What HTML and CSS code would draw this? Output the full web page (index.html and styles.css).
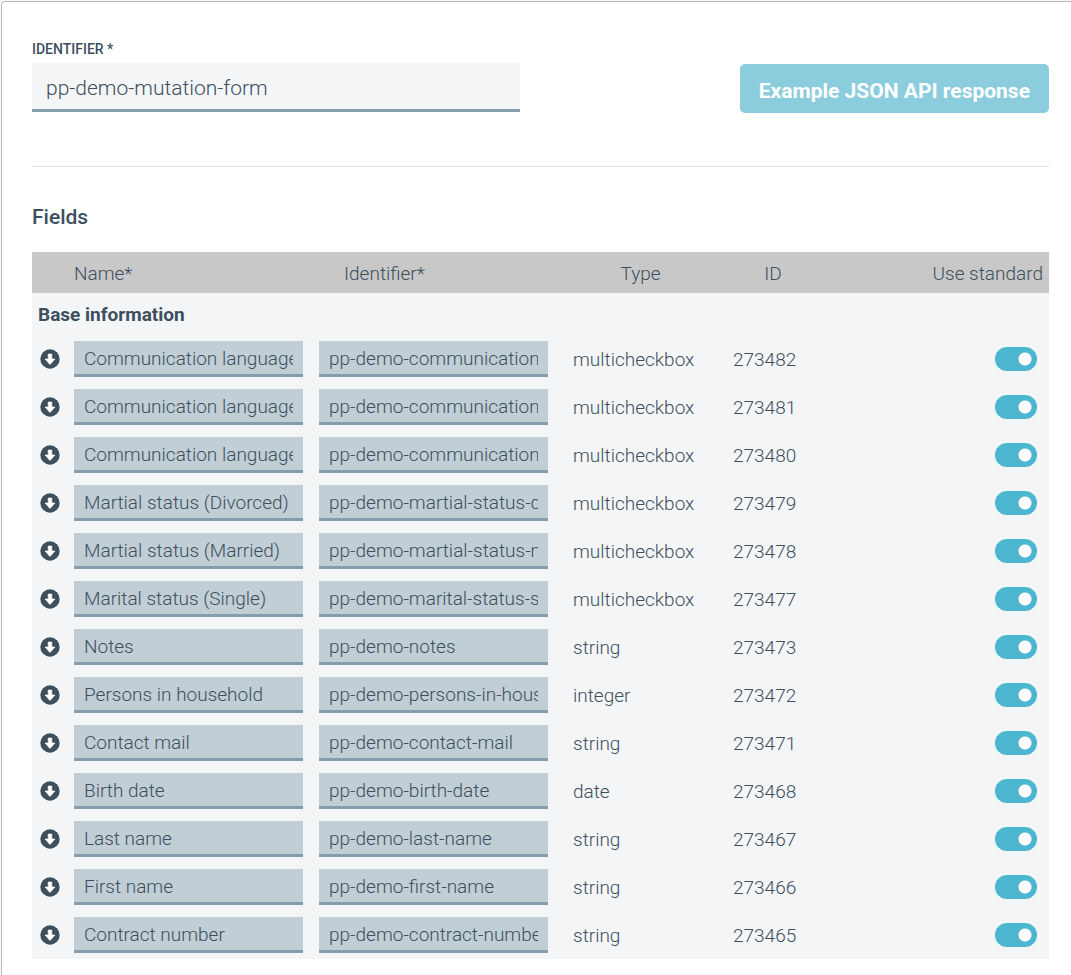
FILE: index.html
```html
<!DOCTYPE html>
<html lang="en">
<head>
    <meta charset="UTF-8">
    <title>Form fields</title>
    <link rel="stylesheet" href="styles.css">
</head>
<body>
<svg class="sprite" aria-hidden="true">
    <symbol id="arrow-down" viewBox="0 0 20 20">
        <circle cx="10" cy="10" r="9.7" fill="#3d4f5c"/>
        <path d="M8.2 5h3.6v5h3.2L10 15.6 5 10h3.2z" fill="#fff" stroke="#fff" stroke-width=".6" stroke-linejoin="round"/>
    </symbol>
</svg>
<main class="panel">
    <div class="top">
        <div class="form-group">
            <label for="identifier">IDENTIFIER *</label>
            <input type="text" id="identifier" value="pp-demo-mutation-form">
        </div>
        <button type="button" class="btn">Example JSON API response</button>
    </div>
    <h2>Fields</h2>
    <table class="fields">
        <colgroup>
            <col class="col-move">
            <col class="col-name">
            <col class="col-name">
            <col class="col-type">
            <col class="col-id">
            <col>
        </colgroup>
        <thead>
        <tr>
            <td></td>
            <th class="name">Name*</th>
            <th class="ident">Identifier*</th>
            <th>Type</th>
            <th>ID</th>
            <th class="standard">Use standard</th>
        </tr>
        </thead>
        <tbody>
        <tr class="group">
            <th colspan="6">Base information</th>
        </tr>
        <tr>
            <td><button type="button" class="move" aria-label="Move down"><svg><use href="#arrow-down"/></svg></button></td>
            <td><input type="text" aria-label="Name" value="Communication language (German)"></td>
            <td><input type="text" aria-label="Identifier" value="pp-demo-communication-language-german"></td>
            <td class="type">multicheckbox</td>
            <td>273482</td>
            <td class="toggle"><input type="checkbox" aria-label="Use standard" checked></td>
        </tr>
        <tr>
            <td><button type="button" class="move" aria-label="Move down"><svg><use href="#arrow-down"/></svg></button></td>
            <td><input type="text" aria-label="Name" value="Communication language (French)"></td>
            <td><input type="text" aria-label="Identifier" value="pp-demo-communication-language-french"></td>
            <td class="type">multicheckbox</td>
            <td>273481</td>
            <td class="toggle"><input type="checkbox" aria-label="Use standard" checked></td>
        </tr>
        <tr>
            <td><button type="button" class="move" aria-label="Move down"><svg><use href="#arrow-down"/></svg></button></td>
            <td><input type="text" aria-label="Name" value="Communication language (English)"></td>
            <td><input type="text" aria-label="Identifier" value="pp-demo-communication-language-english"></td>
            <td class="type">multicheckbox</td>
            <td>273480</td>
            <td class="toggle"><input type="checkbox" aria-label="Use standard" checked></td>
        </tr>
        <tr>
            <td><button type="button" class="move" aria-label="Move down"><svg><use href="#arrow-down"/></svg></button></td>
            <td><input type="text" aria-label="Name" value="Martial status (Divorced)"></td>
            <td><input type="text" aria-label="Identifier" value="pp-demo-martial-status-divorced"></td>
            <td class="type">multicheckbox</td>
            <td>273479</td>
            <td class="toggle"><input type="checkbox" aria-label="Use standard" checked></td>
        </tr>
        <tr>
            <td><button type="button" class="move" aria-label="Move down"><svg><use href="#arrow-down"/></svg></button></td>
            <td><input type="text" aria-label="Name" value="Martial status (Married)"></td>
            <td><input type="text" aria-label="Identifier" value="pp-demo-martial-status-married"></td>
            <td class="type">multicheckbox</td>
            <td>273478</td>
            <td class="toggle"><input type="checkbox" aria-label="Use standard" checked></td>
        </tr>
        <tr>
            <td><button type="button" class="move" aria-label="Move down"><svg><use href="#arrow-down"/></svg></button></td>
            <td><input type="text" aria-label="Name" value="Marital status (Single)"></td>
            <td><input type="text" aria-label="Identifier" value="pp-demo-marital-status-single"></td>
            <td class="type">multicheckbox</td>
            <td>273477</td>
            <td class="toggle"><input type="checkbox" aria-label="Use standard" checked></td>
        </tr>
        <tr>
            <td><button type="button" class="move" aria-label="Move down"><svg><use href="#arrow-down"/></svg></button></td>
            <td><input type="text" aria-label="Name" value="Notes"></td>
            <td><input type="text" aria-label="Identifier" value="pp-demo-notes"></td>
            <td class="type">string</td>
            <td>273473</td>
            <td class="toggle"><input type="checkbox" aria-label="Use standard" checked></td>
        </tr>
        <tr>
            <td><button type="button" class="move" aria-label="Move down"><svg><use href="#arrow-down"/></svg></button></td>
            <td><input type="text" aria-label="Name" value="Persons in household"></td>
            <td><input type="text" aria-label="Identifier" value="pp-demo-persons-in-household"></td>
            <td class="type">integer</td>
            <td>273472</td>
            <td class="toggle"><input type="checkbox" aria-label="Use standard" checked></td>
        </tr>
        <tr>
            <td><button type="button" class="move" aria-label="Move down"><svg><use href="#arrow-down"/></svg></button></td>
            <td><input type="text" aria-label="Name" value="Contact mail"></td>
            <td><input type="text" aria-label="Identifier" value="pp-demo-contact-mail"></td>
            <td class="type">string</td>
            <td>273471</td>
            <td class="toggle"><input type="checkbox" aria-label="Use standard" checked></td>
        </tr>
        <tr>
            <td><button type="button" class="move" aria-label="Move down"><svg><use href="#arrow-down"/></svg></button></td>
            <td><input type="text" aria-label="Name" value="Birth date"></td>
            <td><input type="text" aria-label="Identifier" value="pp-demo-birth-date"></td>
            <td class="type">date</td>
            <td>273468</td>
            <td class="toggle"><input type="checkbox" aria-label="Use standard" checked></td>
        </tr>
        <tr>
            <td><button type="button" class="move" aria-label="Move down"><svg><use href="#arrow-down"/></svg></button></td>
            <td><input type="text" aria-label="Name" value="Last name"></td>
            <td><input type="text" aria-label="Identifier" value="pp-demo-last-name"></td>
            <td class="type">string</td>
            <td>273467</td>
            <td class="toggle"><input type="checkbox" aria-label="Use standard" checked></td>
        </tr>
        <tr>
            <td><button type="button" class="move" aria-label="Move down"><svg><use href="#arrow-down"/></svg></button></td>
            <td><input type="text" aria-label="Name" value="First name"></td>
            <td><input type="text" aria-label="Identifier" value="pp-demo-first-name"></td>
            <td class="type">string</td>
            <td>273466</td>
            <td class="toggle"><input type="checkbox" aria-label="Use standard" checked></td>
        </tr>
        <tr>
            <td><button type="button" class="move" aria-label="Move down"><svg><use href="#arrow-down"/></svg></button></td>
            <td><input type="text" aria-label="Name" value="Contract number"></td>
            <td><input type="text" aria-label="Identifier" value="pp-demo-contract-number"></td>
            <td class="type">string</td>
            <td>273465</td>
            <td class="toggle"><input type="checkbox" aria-label="Use standard" checked></td>
        </tr>
        </tbody>
    </table>
</main>
</body>
</html>
```
FILE: styles.css
```css
* {
    box-sizing: border-box;
}

body {
    margin: 0;
    padding: 1px 0 0 1px;
    background-color: #f8f8f8;
    color: #3d4f5c;
    font-family: Roboto, "Liberation Sans", sans-serif;
    font-size: 19px;
    font-weight: 300;
}

input, button {
    font: inherit;
    color: inherit;
}

.sprite {
    display: none;
}

.panel {
    min-height: calc(100vh - 1px);
    padding: 37px 22px 15px 30px;
    background-color: #fff;
    border: 1px solid #bbb;
    border-width: 1px 0 0 1px;
    border-top-left-radius: 4px;
}

.top {
    display: flex;
    justify-content: space-between;
    align-items: flex-end;
    padding-bottom: 53px;
    border-bottom: 1px solid #e4e4e4;
}

.form-group {
    width: 48%;
    margin-bottom: 1px;
}

.form-group label {
    display: block;
    font-size: 14px;
    font-weight: 500;
    line-height: 20px;
    margin-bottom: 4px;
}

.form-group input {
    display: block;
    width: 100%;
    height: 49px;
    padding: 3px 14px 0;
    font-size: 21px;
    background-color: #f3f5f7;
    border: 0;
    border-bottom: 3px solid #859eae;
}

.btn {
    height: 49px;
    padding: 4px 19px 0;
    font-size: 21px;
    font-weight: 700;
    color: #fff;
    background-color: #8bcddd;
    border: 0;
    border-radius: 5px;
    cursor: pointer;
}

h2 {
    margin: 35px 0 20px;
    font-size: 21px;
    font-weight: 500;
    line-height: 30px;
}

.fields {
    width: 100%;
    table-layout: fixed;
    border-collapse: collapse;
    background-color: #f3f5f7;
}

.col-move {
    width: 34px;
}

.col-name {
    width: 245px;
}

.col-type {
    width: 169px;
}

.col-id {
    width: 96px;
}

.fields th, .fields td {
    height: 48px;
    padding: 0 8px;
    text-align: left;
}

.fields thead th, .fields thead td {
    height: 41px;
    padding-top: 2px;
    font-weight: 300;
    text-align: center;
    background-color: #c8c8c8;
}

.fields thead .name {
    text-align: left;
}

.fields thead .ident {
    padding-left: 33px;
    text-align: left;
}

.fields thead .standard {
    padding-right: 6px;
    text-align: right;
}

.fields .group th {
    height: 42px;
    padding-left: 6px;
    font-weight: 700;
}

.fields td.type {
    padding-left: 17px;
}

.fields td.toggle {
    padding-right: 12px;
    text-align: right;
}

.fields input[type="text"] {
    display: block;
    width: 100%;
    height: 36px;
    padding: 2px 10px 0;
    background-color: #c1ced6;
    border: 0;
    border-bottom: 3px solid #859eae;
}

.move {
    display: block;
    padding: 0;
    background: none;
    border: 0;
    cursor: pointer;
}

.move svg {
    display: block;
    width: 20px;
    height: 20px;
}

.toggle input {
    display: inline-block;
    width: 42px;
    height: 24px;
    margin: 0;
    appearance: none;
    vertical-align: middle;
    border-radius: 12px;
    /* white knob on the right when on */
    background: radial-gradient(circle at 12px 12px, #fff 6px, transparent 7px) #b5bfc6;
    cursor: pointer;
}

.toggle input:checked {
    background: radial-gradient(circle at 30px 12px, #fff 6px, transparent 7px) #4cb5d0;
}
```
